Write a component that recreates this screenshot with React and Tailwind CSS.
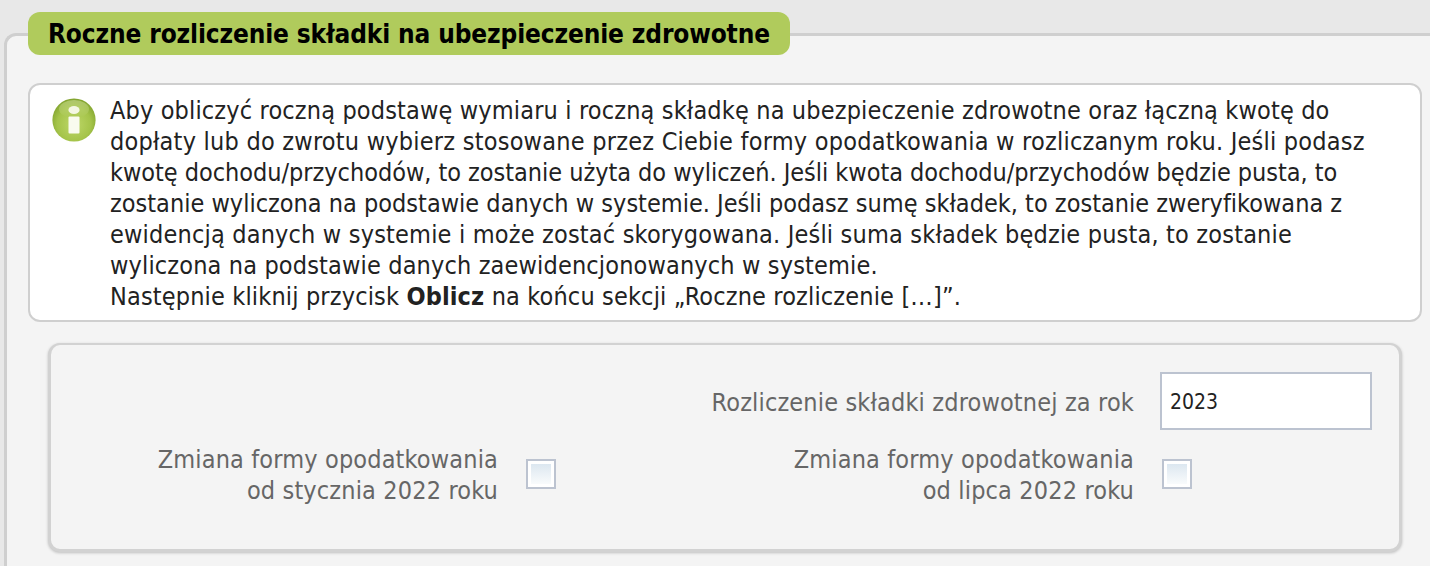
import React from "react";

const font = "font-['DejaVu_Sans',sans-serif] [font-stretch:condensed]";

function InfoIcon() {
  return (
    <svg width="44" height="44" viewBox="0 0 44 44" className="shrink-0">
      <defs>
        <radialGradient id="g" cx="50%" cy="60%" r="60%">
          <stop offset="0%" stopColor="#bdd768" />
          <stop offset="65%" stopColor="#a5c44a" />
          <stop offset="100%" stopColor="#80a22e" />
        </radialGradient>
        <linearGradient id="h" x1="0" y1="0" x2="0" y2="1">
          <stop offset="0%" stopColor="#d5e4a4" />
          <stop offset="100%" stopColor="#a9c850" />
        </linearGradient>
        <filter id="b" x="-20%" y="-20%" width="140%" height="140%">
          <feGaussianBlur stdDeviation="0.6" />
        </filter>
      </defs>
      <circle cx="22" cy="22" r="21.6" fill="url(#g)" />
      <ellipse cx="22" cy="11" rx="15" ry="9" fill="url(#h)" opacity="0.5" filter="url(#b)" />
      <g filter="url(#b)">
        <ellipse cx="22" cy="12" rx="5.6" ry="4" fill="#f4f7e4" />
        <rect x="16.5" y="18.5" width="11" height="17" rx="1" fill="#f9fbef" />
      </g>
    </svg>
  );
}

function Check() {
  return (
    <span className="block w-[30px] h-[30px] border-2 border-[#bcc3d0] bg-white p-[3px]">
      <span className="block w-full h-full bg-gradient-to-b from-[#dce7f0] to-[#f9fbfc]" />
    </span>
  );
}

export default function App() {
  return (
    <div className={`${font} w-[1430px] h-[566px] overflow-hidden bg-[#e8e8e8] pt-3`}>
      <div className="relative z-10 ml-7 w-fit h-[43px] flex items-center pl-5 pr-5 rounded-xl bg-[#b0cb5c] text-black text-[26px] tracking-[-0.14px] font-bold whitespace-nowrap leading-none">
        Roczne rozliczenie składki na ubezpieczenie zdrowotne
      </div>
      <div className="-mt-[22px] ml-1 w-[1500px] h-[560px] border-t-[3px] border-l-[3px] border-[#cfcfcf] rounded-tl-xl bg-[#f4f4f4] pt-[47px] pl-[21px]">
        <div className="w-[1394px] h-[239px] flex gap-[14px] rounded-xl border-2 border-[#cfcfcf] bg-white pl-[22px] pt-[10px] text-[#222222] text-[25px] tracking-[0.15px] leading-[31px]">
          <div className="pt-[3px]"><InfoIcon /></div>
          <div className="whitespace-nowrap">
            <div>Aby obliczyć roczną podstawę wymiaru i roczną składkę na ubezpieczenie zdrowotne oraz łączną kwotę do</div>
            <div className="tracking-[0.225px]">dopłaty lub do zwrotu wybierz stosowane przez Ciebie formy opodatkowania w rozliczanym roku. Jeśli podasz</div>
            <div className="tracking-[-0.03px]">kwotę dochodu/przychodów, to zostanie użyta do wyliczeń. Jeśli kwota dochodu/przychodów będzie pusta, to</div>
            <div className="tracking-[0.007px]">zostanie wyliczona na podstawie danych w systemie. Jeśli podasz sumę składek, to zostanie zweryfikowana z</div>
            <div className="tracking-[0.18px]">ewidencją danych w systemie i może zostać skorygowana. Jeśli suma składek będzie pusta, to zostanie</div>
            <div>wyliczona na podstawie danych zaewidencjonowanych w systemie.</div>
            <div>Następnie kliknij przycisk <b>Oblicz</b> na końcu sekcji „Roczne rozliczenie […]”.</div>
          </div>
        </div>
        <div className="mt-[21px] ml-5 w-[1354px] h-[209px] rounded-xl border-t-2 border-l-[3px] border-r-[3px] border-b-[3px] border-[#d2d2d2] bg-[#f4f4f4] shadow-[0_1px_3px_rgba(0,0,0,0.22)] text-[#666666] text-[25px] tracking-[0.15px] leading-[31px]">
          <div className="flex justify-end items-center pt-[27px] pr-[27px]">
            <span className="pt-[2px]">Rozliczenie składki zdrowotnej za rok</span>
            <input readOnly value="2023" className="ml-[26px] w-[212px] h-[58px] border-2 border-[#bcc3d0] bg-white px-2 pt-[2px] text-[#222222] text-[21px] tracking-normal outline-none" />
          </div>
          <div className="flex mt-[14px]">
            <div className="w-[447px] text-right whitespace-nowrap">Zmiana formy opodatkowania<br />od stycznia 2022 roku</div>
            <div className="ml-[28px] pb-[2px] flex items-center"><Check /></div>
            <div className="ml-[29px] w-[549px] text-right whitespace-nowrap">Zmiana formy opodatkowania<br />od lipca 2022 roku</div>
            <div className="ml-[28px] pb-[2px] flex items-center"><Check /></div>
          </div>
        </div>
      </div>
    </div>
  );
}
